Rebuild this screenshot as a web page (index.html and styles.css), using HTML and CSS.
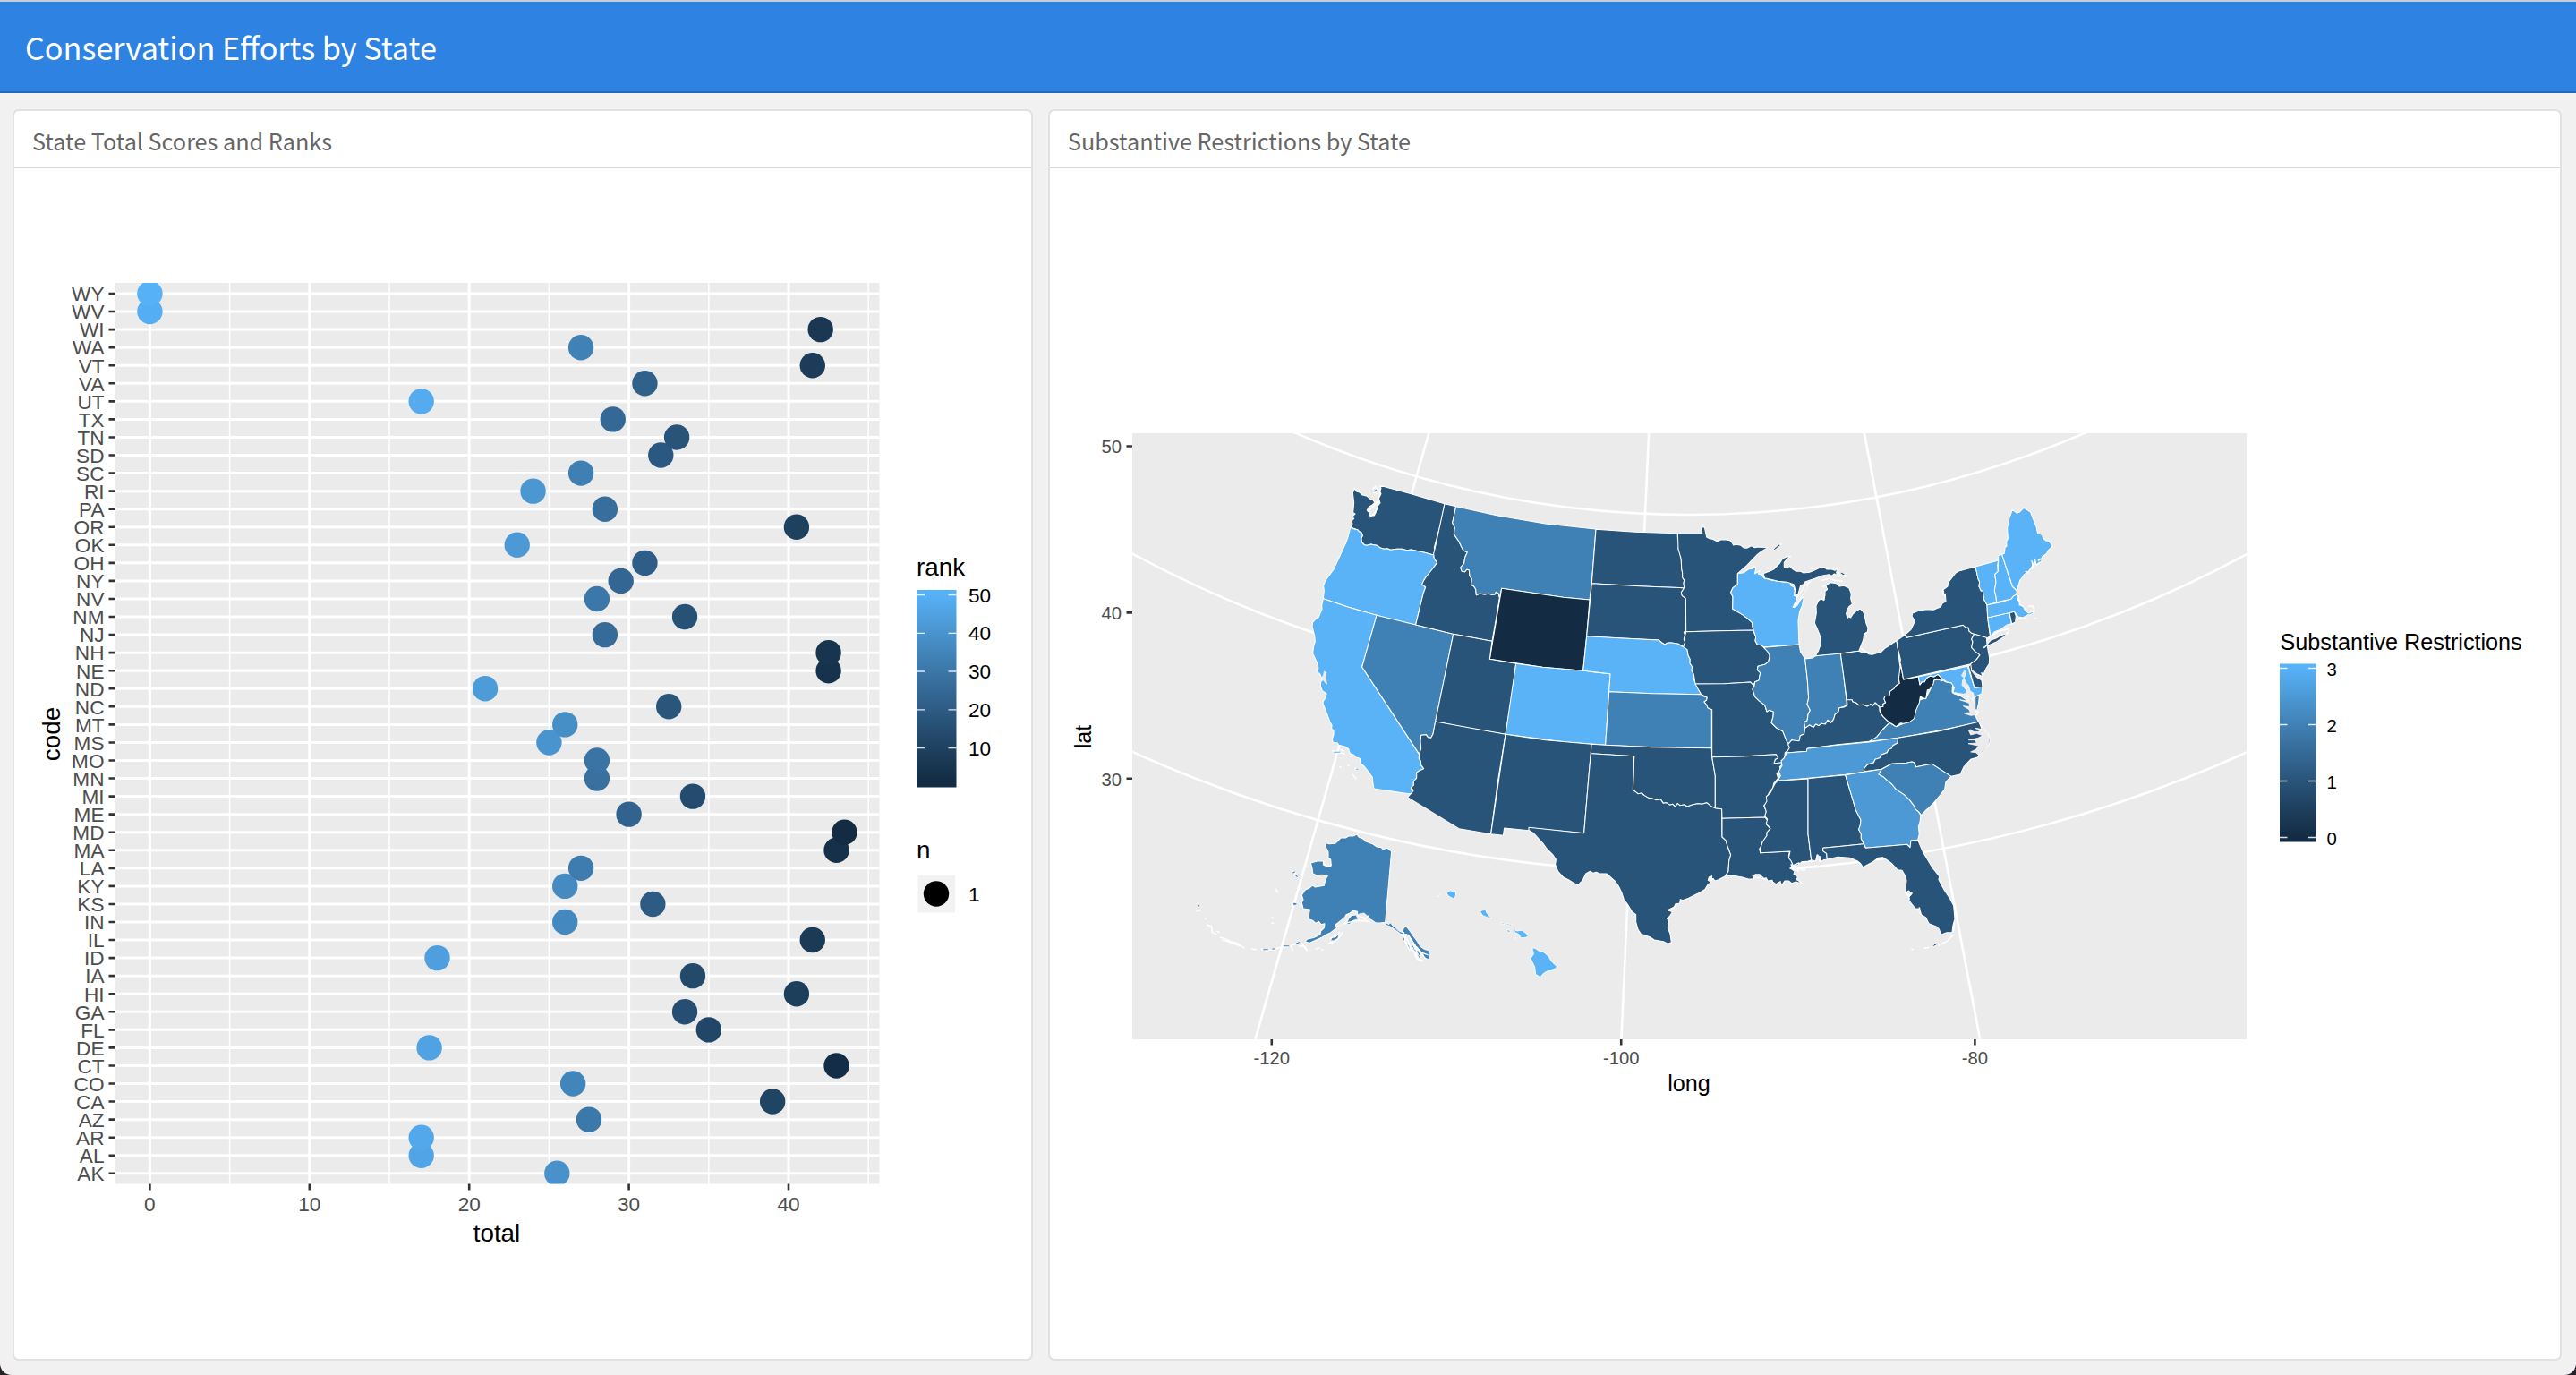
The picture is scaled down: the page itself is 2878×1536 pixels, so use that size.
FILE: index.html
```html
<!DOCTYPE html>
<html lang="en">
<head>
<meta charset="utf-8">
<title>Conservation Efforts by State</title>
<link rel="stylesheet" href="styles.css">
</head>
<body>
<div class="window">
<header class="navbar"><h1 class="brand">Conservation Efforts by State</h1></header>
<main class="dashboard">
<section class="card card-scores">
<h2 class="card-title">State Total Scores and Ranks</h2>
<svg class="chart" viewBox="16 188 1136 1330">
  <defs>
    <linearGradient id="ramp" x1="0" y1="1" x2="0" y2="0">
      <stop offset=".025" stop-color="#132B43"/><stop offset=".183" stop-color="#1E3F5D"/><stop offset=".342" stop-color="#29547A"/><stop offset=".5" stop-color="#356A97"/><stop offset=".658" stop-color="#4081B5"/><stop offset=".817" stop-color="#4C99D5"/><stop offset=".975" stop-color="#56B1F7"/>
    </linearGradient>
    <clipPath id="scorePanel"><rect x="128.5" y="316" width="854" height="1006.5"/></clipPath>
  </defs>
  <rect class="panel" x="128.5" y="316" width="854" height="1006.5"/>
  <g id="scoreGrid" clip-path="url(#scorePanel)"></g>
  <g id="scoreDots" clip-path="url(#scorePanel)"></g>
  <g id="scoreAxes" class="axis"></g>
  <text class="axis-title" x="555" y="1387" text-anchor="middle">total</text>
  <text class="axis-title" transform="translate(67 820) rotate(-90)" text-anchor="middle">code</text>
  <text class="axis-title" x="1024" y="642.5">rank</text>
  <rect x="1024" y="659" width="44.500" height="220.500" fill="url(#ramp)"/>
  <path class="legend-tick" d="M1024 664.5h9m26.500 0h9M1024 707.300h9m26.500 0h9M1024 750h9m26.500 0h9M1024 792.800h9m26.500 0h9M1024 835.500h9m26.500 0h9"/>
  <g class="legend-label"><text x="1082" y="672.500">50</text><text x="1082" y="715.300">40</text><text x="1082" y="758">30</text><text x="1082" y="800.800">20</text><text x="1082" y="843.500">10</text></g>
  <text class="axis-title" x="1024" y="959">n</text>
  <rect x="1025.500" y="978" width="41.500" height="41.500" fill="#f2f2f2"/>
  <circle cx="1046" cy="998.500" r="14.200"/>
  <text class="legend-label" x="1082" y="1007">1</text>
</svg>
</section>
<section class="card card-map">
<h2 class="card-title">Substantive Restrictions by State</h2>
<svg class="chart chart-map" viewBox="1173 188 1687 1330">
  <defs><clipPath id="mapPanel"><rect x="1265" y="484" width="1245" height="677"/></clipPath></defs>
  <rect class="panel" x="1265" y="484" width="1245" height="677"/>
  <g class="graticule" clip-path="url(#mapPanel)">
    <path d="M1596.400 483.800L1402.500 1160.700M1842.100 483.800L1811.400 1160.700M2082.800 483.800L2212.100 1160.700"/>
    <circle cx="1888.200" cy="-535" r="1110"/><circle cx="1888.200" cy="-535" r="1311"/><circle cx="1888.200" cy="-535" r="1509.500"/>
  </g>
  <g class="states" transform="scale(.333333)">
    <g transform="translate(4320 1500)">
      <path class="s1" d="M220 137L228 148 237 150 245 158 262 163 272 172 282 176 288 184 280 192 268 199 262 210 270 215 272 228 286 228 292 216 294 199 306 186 301 170 309 155 304 145 309 137 305 127L410 155 522 188L510 250 487 335 489 345 485 360L455 352 410 342 395 344 380 340 362 340 340 343 330 338 318 340 305 335 295 328 285 326 275 324 262 328 253 326 245 318 242 305 247 295 243 285 235 281 230 275 215 270 206 265 213 258 211 245 218 238 212 232 222 222 215 218 218 185 214 152Z"/>
      <path class="s3" d="M206 268L215 272 230 275 235 281 243 285 247 295 242 305 245 318 253 326 262 328 275 324 285 326 295 328 305 335 318 340 330 338 340 343 362 340 380 340 395 344 410 342 455 352 485 360 487 372 497 385 485 402 470 425 462 430 452 445 450 452 446 458 458 468 450 490 438 540 425 594L350 578 294 562 200 535 115 506L118 480 116 462 122 447 150 408 170 365 190 322 198 300Z"/>
      <path class="s3" d="M115 506L200 535 294 562L270 650 245 735L437 1028 436 1042 442 1050 443 1064 452 1076 445 1080 435 1084 428 1090 428 1108 418 1118 418 1132 410 1138 410 1145 417 1150 414 1158 402 1160L285 1143 281 1120 280 1105 262 1080 252 1068 240 1058 238 1042 225 1038 218 1030 205 1025 200 1010 188 1002 167 997 163 990 148 988 145 978 150 962 150 948 143 942 144 930 138 920 125 885 115 860 114 852 122 840 126 825 112 815 106 800 107 785 112 780 105 760 92 748 99 740 94 720 80 690 83 665 88 650 86 630 78 600 80 585 90 575 100 568 105 555 111 542 110 530Z"/>
      <path class="s2" d="M294 562L425 594 551 625L520 780 491 918L483 960 476 973 466 971 460 962 443 964 441 985 443 1008 437 1028L245 735Z"/>
      <path class="s1" d="M522 188L560 197 548 252 556 268 553 290 570 315 578 332 585 345 598 350 590 368 587 388 575 402 580 415 590 416 596 408 604 410 606 430 613 440 611 460 620 465 626 475 628 494 640 489 655 492 670 490 680 493 690 492 694 484 702 488 706 502L695 570 681 649L551 625 425 594L450 490 458 468 446 458 452 445 462 430 485 402 497 385 487 372 485 355 489 340Z"/>
      <path class="s2" d="M560 197L700 228 860 255 1029 273L1015 455 1008 510L920 502 713 472L706 502 702 488 694 484 690 492 680 493 670 490 655 492 640 489 628 494 626 475 620 465 611 460 613 440 606 430 604 410 596 408 590 416 580 415 575 402 587 388 590 368 598 350 585 345 578 332 570 315 553 290 556 268 548 252Z"/>
      <path class="s0" d="M713 472L920 502 1008 510L998 632 986 748L850 736 673 709Z"/>
      <path class="s1" d="M551 625L681 649 673 709 761 724L745 850 726 961L600 940 491 918Z"/>
      <path class="s3" d="M761 724L850 736 986 748 1077 758L1073 820 1061 997L930 987 726 961Z"/>
      <path class="s1" d="M491 918L726 961L700 1120 677 1295L570 1277L398 1172L408 1161 417 1150 410 1138 418 1132 418 1118 428 1108 428 1090 435 1084 452 1076 443 1064 442 1050 436 1042 437 1028 443 1008 441 985 443 964 460 962 466 971 476 973 483 960Z"/>
      <path class="s1" d="M726 961L860 980 1014 994L1012 1024 1000 1160 989 1292L806 1274 804 1283 722 1275 718 1300 677 1295Z"/>
      <path class="coast" d="M306 140L302 165 297 180 290 190 280 200 265 214M301 182L296 205 285 222 272 232M282 138L290 130 296 138M284 150L296 155M145 1015L162 1022 187 1026M171 1070L175 1072M198 1064L201 1066M223 1074L233 1080M214 1096L225 1110M176 1012L183 1017"/>
      <path class="water" d="M119 751L125 753 124 773 127 793 119 784 109 771 115 765Z"/>
      <path class="fill3" d="M152 1021h18M227 1077l5 2"/><path class="fill1" d="M285 146l7-3"/>
    </g>
    <g transform="translate(5340 1680)">
      <path class="s1" d="M9 94L140 103 283 107L283 125 288 140 285 160 292 175 295 195 296 225 299 240 299 255 305 265 303 275 307 290L170 285 -5 275Z"/>
      <path class="s1" d="M-5 275L170 285 305 290 302 300 295 305 298 316 310 326L311 436 304 438 308 450 304 462 308 472 302 488 285 478 275 476 262 474 250 474 240 480 230 474 219 465 100 459 -22 453Z"/>
      <path class="s3" d="M-22 452L100 459 219 465 230 474 240 480 250 474 262 474 285 478 302 488 315 497 318 515 325 530 324 542 332 555 330 567 337 580 336 592 340 605 347 615 352 630 362 647 200 644 53 638L57 578 -34 568Z"/>
      <path class="s2" d="M53 638L200 644 362 647 372 655 382 657 380 666 372 672 380 682 384 692 397 698V827L200 824 41 817Z"/>
      <path class="s1" d="M-6 814L41 817 200 824 397 827 398 857L409 920V1028L395 1022 380 1010 365 1015 350 1013 335 1016 315 1023 305 1017 290 1019 283 1013 275 1023 266 1015 257 1018 245 1010 235 1012 225 998 212 1001 200 997 185 994 170 985 163 978 150 980 133 967L137 854 -8 845Z"/>
      <path class="s1" d="M-8 845L137 854 133 967 150 980 163 978 170 985 185 994 200 997 212 1001 225 998 235 1012 245 1010 257 1018 266 1015 275 1023 283 1013 290 1019 305 1017 315 1023 335 1016 350 1013 365 1015 380 1010 395 1022 409 1028 431 1031L432 1125 444 1136 450 1155 461 1185 455 1205 453 1240 443 1256 420 1268 408 1272 402 1264 396 1270 398 1256 388 1260 385 1270 395 1276 383 1286 375 1300 350 1315 320 1330 300 1337 292 1334 290 1347 275 1350 272 1360 258 1366 250 1370 266 1376 258 1388 248 1400 253 1405 250 1430 258 1450 262 1478 250 1483 235 1475 205 1470 190 1460 160 1450 150 1435 143 1410 143 1385 130 1375 115 1350 103 1335 95 1310 85 1290 75 1275 45 1248 20 1247 10 1243 0 1246 -10 1240 -25 1248 -35 1270 -52 1287 -80 1270 -100 1260 -118 1240 -127 1218 -125 1200 -135 1185 -155 1165 -170 1145 -200 1112 -216 1102V1093L-31 1112 -15 920Z"/>
      <path class="s1" d="M283 107H365L363 87H373L380 120 390 125 400 127 415 134 428 129 445 129 458 131 465 138 470 147 480 145 495 148 505 156 515 157 530 149 540 155 555 153 585 155L565 167 550 178 515 215 484 242V278L468 290 461 305 468 320 467 360 500 380 520 395 533 407 534 422 539 432 420 434 311 437 310 326 298 316 295 305 305 290 303 275 305 265 299 255 299 240 296 225 295 195 285 160Z"/>
      <path class="s1" d="M311 437L420 434 537 432 541 445 545 455 543 468 550 480 563 482 572 490 585 504 592 518 587 538 575 547 552 553 550 565 560 575 555 600 542 605 537 617 527 606 440 611 342 612 337 580 330 567 332 555 324 542 325 530 318 515 315 497 302 488 308 472 304 462 308 450Z"/>
      <path class="s1" d="M342 612L440 611 527 606 539 618 534 630 542 655 555 668 575 683 582 705 590 700 604 705 603 722 597 742 615 760 635 770 645 795 655 812 660 830 643 842 640 875 606 878 610 865 620 860 612 848 500 855 398 857V698L384 692 380 682 372 672 380 666 382 657 362 647 352 630Z"/>
      <path class="s3" d="M484 242L505 239 520 228 533 226 540 218 545 225 541 243 558 233 553 243 565 247 572 257 600 265 620 268 640 271 660 271 663 282 673 288 676 305 673 316 683 320 680 345 673 356 683 350 695 330 707 318 700 350 692 370 687 400 688 430 690 480 572 488 563 482 550 480 543 468 545 455 537 432 533 407 520 395 500 380 467 360 468 320 461 305 468 290 484 278Z"/>
      <path class="s2" d="M572 490L690 480 695 505 710 528 718 600 722 660 717 680 727 700 720 715 717 735 707 740 710 760 707 780 694 785 692 803 678 803 665 800 658 812 650 808 645 795 635 770 615 760 597 742 603 722 604 705 590 700 582 705 575 683 555 668 542 655 534 630 540 618 542 605 555 600 560 575 550 565 552 553 575 547 587 538 592 518 585 504Z"/>
      <path class="s2" d="M710 528L735 525 745 518 829 509 840 590 848 660 850 683 840 688 825 692 822 705 810 715 806 730 797 742 786 733 778 747 765 745 756 752 746 747 738 758 725 750 710 760 707 740 717 735 720 715 727 700 717 680 722 660 718 600Z"/>
      <path class="s1" d="M398 857L500 855 612 848 620 860 610 865 606 878 640 875 625 890 628 902 615 912 620 928 605 945 602 960 590 975 582 995 585 1010 572 1020 580 1040 575 1059 432 1063 431 1031 409 1028V920Z"/>
      <path class="s1" d="M432 1063L575 1059 585 1070 580 1082 594 1097 582 1110 582 1125 568 1140 563 1155 557 1165 560 1178 658 1173 655 1190 663 1200 668 1215 662 1230 675 1240 672 1250 685 1258 682 1268 697 1275 697 1282 680 1275 665 1280 655 1272 642 1272 633 1285 625 1275 613 1283 605 1285 600 1270 585 1272 580 1262 565 1265 558 1250 545 1250 534 1255 540 1265 520 1266 500 1260 470 1255 443 1256 453 1240 455 1205 461 1185 450 1155 444 1136 432 1125Z"/>
      <path class="coast" d="M535 1252L550 1263 565 1258 575 1268M600 1275L615 1285 628 1275M663 1218L675 1222 671 1233 684 1232M690 1274L700 1280M390 1260L400 1268M260 1370L275 1356M670 1215L686 1210 705 1208M705 1225L710 1235"/>
    </g>
    <g transform="translate(5700 1680)">
      <path class="s1" d="M210 242L230 235 245 228 258 215 265 208 275 192 288 186 302 184 288 195 280 205 280 220 290 224 297 217 310 228 320 235 335 235 345 240 365 238 380 232 400 222 415 220 422 228 440 228 450 232 458 225 455 240 462 248 448 243 440 250 430 245 405 250 385 258 365 265 350 270 345 278 335 282 330 300 325 316 315 308 317 295 312 278 290 271 260 268 215 257Z"/>
      <path class="s1" d="M435 272L455 275 465 285 480 283 497 290 505 310 503 325 508 345 498 352 490 365 490 385 503 390 510 378 525 365 535 360 545 370 550 385 555 410 561 425 559 438 548 445 545 465 537 485 530 502 470 510 385 518 395 500 402 480 400 450 392 430 382 408 388 375 387 350 395 333 405 325 412 332 417 315 417 302 425 295 420 283Z"/>
      <path class="coast" d="M246 162L270 143M310 355L320 335 335 310 350 285 368 270M330 318L345 290M350 280L360 275M408 265L430 258 450 265 475 268M410 285L422 280M415 310L414 330M463 238L467 247M481 247L487 249M538 493L555 505 578 512M550 445L556 440M488 375L493 390"/>
      <path class="water" d="M315 352L323 325 345 290 353 275 362 271 358 290 345 310 330 330 322 346Z"/>
      <path class="fill1" d="M248 160l16-13M472 241l8 4"/>
      <path class="s1" d="M469 510L530 502 545 508 555 505 563 512 575 514 605 505 618 492 630 485 657 467 663 505 667 545 672 560 664 595 667 610 655 618 648 628 635 637 633 652 617 653 615 663 620 675 610 680 612 688 600 690 585 675 577 685 570 680 558 687 545 682 530 683 520 675 510 672 507 665 490 668 480 590Z"/>
      <path class="s1" d="M490 665L507 665 510 672 520 675 530 683 545 682 558 687 570 680 577 685 585 675 600 690 600 703 612 722 633 742 610 765 590 790 565 805 460 815 357 829 355 838 288 843 298 825 293 815 305 800 330 803 334 785 347 780 350 760 365 750 378 758 386 747 396 752 405 745 418 747 426 733 437 742 446 730 450 715 462 705 465 692 480 690 492 683Z"/>
      <path class="s2" d="M565 805L590 790 610 765 633 742 655 755 680 745 712 730 720 700 735 665 755 660 770 630 782 600 805 595 820 605 845 610 843 640 865 648 890 665 905 680 910 700 932 740 800 768 662 793Z"/>
      <path class="s2" d="M920 655L935 645 932 675 925 705 920 695Z"/>
      <path class="s0" d="M670 545L680 597 730 588 735 615 742 605 750 605 758 592 770 585 782 588 795 580 808 590 810 602 790 595 782 600 780 612 768 630 760 632 755 662 736 655 733 675 722 700 716 728 700 740 680 745 670 743 655 755 645 748 633 742 612 722 602 708 600 690 612 688 610 680 620 675 615 663 617 653 633 652 635 637 648 628 655 618 667 610 664 595Z"/>
      <path class="s3" d="M730 588L895 553 918 625 945 622 942 645 920 655 915 660 890 650 865 650 845 642 850 625 840 608 825 605 810 595 795 580 782 588 770 585 758 592 750 605 742 605 735 615Z"/>
      <path class="s1" d="M898 553L908 545 913 565 925 580 942 600 945 622 918 625Z"/>
      <path class="water" d="M885 567L890 574 883 592 888 606 898 618 904 637 914 642 916 655 910 663 920 680 919 700 927 715 905 718 882 710 904 708 900 698 880 686 902 688 900 676 868 665 898 670 897 655 870 650 848 645 852 641 880 646 894 642 888 630 876 616 878 600 883 592 875 585Z"/>
      <path class="water" d="M908 568L925 580 943 587 942 600 925 590Z"/>
      <path class="s1" d="M657 467L672 457 688 445 690 457 880 415 888 422 897 423 900 435 908 442 917 445 908 462 912 470 908 490 920 503 936 515 925 530 905 545 680 597 673 560 668 545 670 530 660 490Z"/>
      <path class="s1" d="M688 445L705 430 718 402 708 385 710 375 735 365 760 362 780 364 805 353 810 342 822 335 820 310 812 313 815 300 808 300 828 285 830 272 855 240 865 234 921 219 926 240 930 260 935 270 933 285 940 300 946 300 950 330 960 347 962 390 970 450 962 458 958 458 917 445 908 442 900 435 897 423 888 422 880 415 690 457Z"/>
      <path class="s1" d="M960 480L973 465 990 459 1005 450 1025 443 1035 432 1030 442 1015 455 990 472 965 483Z"/>
      <path class="s1" d="M917 445L958 457 960 480 968 525 967 545 957 560 945 587 925 578 908 565 905 545 925 530 936 515 920 503 908 490 912 470 908 462Z"/>
      <path class="s3" d="M962 390L1035 373 1042 410 1025 415 1005 430 985 437 972 453Z"/>
      <path class="s1" d="M1035 373L1052 370 1057 385 1055 405 1043 411Z"/>
      <path class="s3" d="M960 347L1000 340 1040 328 1048 318 1058 312 1066 320 1062 330 1072 338 1068 347 1080 350 1088 366 1100 375 1112 370 1116 366 1118 372 1105 380 1098 380 1080 390 1065 387 1052 370 962 390Z"/>
      <path class="s3" d="M921 219L998 198 995 215 997 235 986 245 990 270 985 300 990 320 992 338 960 347 950 330 946 300 940 300 933 285 935 270 930 260Z"/>
      <path class="s3" d="M998 198V182L1010 178 1030 240 1045 285 1060 300 1058 312 1048 318 1040 328 992 338 990 320 985 300 990 270 986 245 997 235Z"/>
      <path class="s3" d="M1010 178L1018 175 1020 155 1026 150 1025 135 1030 125 1028 90 1035 55 1045 28 1060 40 1068 37 1083 22 1105 35 1115 60 1125 85 1130 108 1145 112 1148 125 1158 132 1168 134 1180 150 1165 165 1160 175 1145 185 1143 200 1128 215 1118 203 1107 225 1095 238 1085 245 1078 255 1070 265 1060 300 1045 285 1030 240Z"/>
      <path class="coast" d="M962 480L950 490M960 465L975 450 1000 435 1030 428M1100 352L1112 350 1118 362 1115 372M1085 392L1092 393M1118 392L1124 392M1065 395L1075 390M1065 320L1070 345 1080 352M1110 200L1115 220 1105 228M1120 195L1125 215 1135 205M1132 198L1142 192M1090 235L1100 240M845 640L870 650M945 587L942 575M932 705L922 718M670 545L672 560M812 303L820 318"/>
    </g>
    <g transform="translate(5700 2340)">
      <path class="s2h" d="M288 183L355 178 357 169 460 157 565 147 662 133 660 150 645 158 640 168 630 172 625 182 605 190 600 200 585 205 580 216 560 222 548 235 549 247 485 256 360 268 258 277 268 260 262 245 273 225 270 210 280 200Z"/>
      <path class="s1" d="M258 277L360 270V455L371 542 360 547 340 548 325 560 310 560 303 545 295 535 300 513 200 518 203 495 208 480 222 460 222 450 234 437 220 420 224 405 215 395 220 380 213 360 222 345 220 330 235 315 242 300 250 285Z"/>
      <path class="s1" d="M360 269L485 257 510 340 520 375 537 408 535 425 530 440 538 455 538 470 547 488 480 495 410 502 410 512 422 520 424 540 412 542 402 548 398 530 390 525 386 545 371 542 360 455Z"/>
      <path class="s1" d="M548 245V235L560 222 580 216 585 205 600 200 605 190 625 182 630 172 640 168 645 158 660 150 662 133 800 110 932 79 940 95 960 115 970 135 968 152 945 180 933 190 930 197 905 205 882 230 870 255 840 262 775 220 722 230 715 215 708 213 690 217 640 220 607 238Z"/>
      <path class="s2h" d="M485 257L548 247 607 238 597 255 612 263 625 275 640 287 655 305 685 325 700 340 715 360 720 372 730 380 738 392 735 415 730 430 733 455 728 475 705 477 702 500 692 490 553 502 547 488 538 470 538 455 530 440 535 425 537 408 520 375 510 340Z"/>
      <path class="s2" d="M607 238L640 220 690 217 708 213 715 215 722 230 775 220 840 262 822 280 818 305 805 322 790 340 780 352 765 367 755 375 740 392 730 380 720 372 715 360 700 340 685 325 655 305 640 287 625 275 612 263 597 255Z"/>
      <path class="s1" d="M547 488L553 502 692 490 702 500 705 477 728 475 745 515 775 565 800 597 798 608 815 640 835 670 848 695 852 740 846 760 843 785 825 785 805 793 800 775 790 765 765 755 755 735 735 722 730 705 720 705 700 680 697 667 708 655 697 645 686 652 690 610 683 590 675 577 660 575 640 553 625 542 610 533 595 535 575 550 555 560 545 567 535 553 525 545 500 535 460 532 424 540 422 520 410 512 410 502 480 495Z"/>
      <path class="water" d="M938 88L968 130 964 155 932 190 922 182 905 180 922 172 932 160 915 156 897 152 925 150 920 140 898 140 930 133 945 125 925 118 905 123 898 107 905 105 915 112 935 112 930 105 920 100 940 103Z"/>
      <path class="coast" d="M388 542L392 525M398 545L402 530M310 560L330 552M340 548L380 547M325 568L328 580M330 570L345 577M798 828L825 815 845 795M851 750L848 780M708 841L712 842M750 838L765 835M686 650L700 662 708 652M692 655L700 672M733 702L738 722M300 570L320 572"/>
      <path class="s1 thin" d="M775 832L785 823 796 820 793 826 782 831Z"/>
    </g>
    <g transform="translate(3960 2580)">
      <path class="s2" d="M485 245L495 248 515 247 525 237 535 227 550 228 560 222 575 222 588 216 595 226 610 232 618 240 640 248 655 258 670 260 675 266 690 262 704 273 683 511 665 513 650 512 640 505 628 498 620 490 600 492 590 485 590 475 575 472 565 480 552 485 545 500 530 508 515 520 520 530 500 545 480 555 470 562 430 580 415 577 420 568 445 562 465 552 467 540 478 530 480 515 468 518 460 508 450 514 440 505 425 500 430 468 408 465 403 445 408 435 403 420 415 402 430 395 440 387 448 393 478 388 482 370 490 355 470 352 455 355 440 347 438 330 433 312 455 306 477 305 475 318 490 325 502 320 500 300 492 295 492 275 482 255Z"/>
      <path class="water" d="M515 525L530 508 548 492 565 480 578 473 588 478 580 486 565 488 550 510 530 522ZM595 483L612 480 628 494 620 500 600 508 592 495Z"/>
      <path class="s2 thin" d="M552 518L560 500 570 488 585 486 592 500 575 505 565 516ZM500 572L505 560 515 562 527 548 525 565 510 572ZM683 511L695 518 700 512 708 522 718 530 728 540 740 545 745 530 753 525 765 540 775 555 790 575 800 592 815 602 828 605 834 618 828 635 815 630 808 615 795 600 785 590 775 575 765 560 755 550 745 552 735 550 715 535 700 525 685 520ZM745 560L752 570 750 578 742 568ZM755 580L765 590 768 608 758 595ZM770 585L782 592 790 612 780 605ZM785 612L798 625 805 640 795 635ZM373 445L388 446 386 452 377 455ZM383 582L397 575 403 582 388 585Z"/>
      <path class="coast" d="M748 555L760 575 768 600 785 612 800 640M760 553L775 578 782 600 805 618 820 635M745 545L750 575 765 605M790 595L800 610 825 620M780 615L790 635 808 640M768 565L790 600M370 340L380 345 390 361M317 400L322 411M304 494L306 498M303 512L308 515M55 452L58 460M52 473L64 470M80 499h3M86 520L100 524 103 545 116 550M120 541L126 545M130 562L145 565 165 575 190 583 210 597M138 570L160 577 195 590M235 600L250 602M268 601L285 605 310 603 325 596 345 593 365 590 385 582 400 578M368 590L372 604M395 590L415 592 420 606M405 582L415 600M450 600L462 596M470 602h4M492 582L515 575 530 560 540 544M498 565L520 555 530 545M545 515L575 508 600 505 630 508M590 488L615 498 625 490M475 308L485 322 500 322M420 325h4"/>
      <path class="fill2" d="M275 602h14M305 600h8M343 590h17M385 582l10-4M374 345l5-3M382 352l6 6M56 458l3-3M792 608l6 12"/>
      <path class="s3 thin" d="M889 412L900 405 918 408 920 422 910 431 895 423ZM1001 473L1012 470 1017 463 1022 478 1038 497 1025 494 1010 488ZM1070 512L1088 515 1107 518 1103 522 1088 518 1075 517ZM1090 536L1100 538 1102 545 1094 543ZM1115 532L1122 540 1142 538 1163 555 1155 562 1138 563 1130 550 1118 545ZM1116 565L1124 563 1123 567ZM1176 597L1185 598 1197 606 1215 612 1230 625 1240 642 1259 660 1245 672 1225 675 1212 683 1203 695 1187 685 1184 660 1170 632 1180 618ZM857 425L866 418 864 422Z"/>
    </g>
  </g>
  <g class="axis">
    <path d="M1258.500 498.500H1265M1258.500 684.400H1265M1258.500 869.700H1265M1420.800 1161v6.500M1811.200 1161v6.500M2206.400 1161v6.500"/>
    <g text-anchor="end"><text x="1253" y="506">50</text><text x="1253" y="692">40</text><text x="1253" y="877.500">30</text></g>
    <g text-anchor="middle"><text x="1420.800" y="1188.500">-120</text><text x="1811.200" y="1188.500">-100</text><text x="2206.400" y="1188.500">-80</text></g>
  </g>
  <text class="axis-title" x="1887" y="1218.500" text-anchor="middle">long</text>
  <text class="axis-title" transform="translate(1218.500 823) rotate(-90)" text-anchor="middle">lat</text>
  <text class="axis-title" x="2547.500" y="726">Substantive Restrictions</text>
  <rect x="2547" y="741.500" width="40.500" height="199" fill="url(#ramp)"/>
  <path class="legend-tick" d="M2547 746.500h8.500m23.500 0h8.500M2547 809.500h8.500m23.500 0h8.500M2547 872.500h8.500m23.500 0h8.500M2547 935.500h8.500m23.500 0h8.500"/>
  <g class="legend-label"><text x="2599.500" y="754.500">3</text><text x="2599.500" y="817.500">2</text><text x="2599.500" y="880.500">1</text><text x="2599.500" y="943.500">0</text></g>
</svg>
</section>
</main>
</div>
<script src="scores.js"></script>
</body>
</html>
```
FILE: styles.css
```css
* { box-sizing: border-box; }
html { background: #29212a; }
body { margin: 0; width: 2878px; height: 1536px; overflow: hidden; }
.window { height: 1536px; display: flex; flex-direction: column; background: #f1f1f1; border-top: 2px solid #c4ccd6; border-radius: 0 0 13px 13px; overflow: hidden; }
.navbar { flex: none; height: 102px; padding: 0 28px; display: flex; align-items: center; background: #2e82e1; border-bottom: 2px solid #2268b8; }
.brand { margin: 0; font: 400 34.200px/50px "Noto Sans CJK SC", "Open Sans", sans-serif; color: #fff; }
.dashboard { flex: 1; min-height: 0; display: flex; gap: 17px; padding: 18px 16px 16px 14px; }
.card { display: flex; flex-direction: column; background: #fff; border: 2px solid #e1e1e1; border-radius: 7px; overflow: hidden; }
.card-scores { flex: none; width: 1140px; }
.card-map { flex: 1; min-width: 0; }
.card-title { flex: none; height: 64px; margin: 0; padding: 6px 20px 0; border-bottom: 2px solid #d8d8d8; font: 400 25.200px/54px "Noto Sans CJK SC", "Open Sans", sans-serif; color: #666; }
.chart { display: block; flex: 1; min-height: 0; width: 100%; font-family: "Liberation Sans", Arial, sans-serif; font-size: 22.600px; }
.chart-map { font-size: 20.300px; }
.panel { fill: #ebebeb; }
.axis text { fill: #4d4d4d; }
.axis path { stroke: #333; stroke-width: 2.600; fill: none; }
.axis-title { font-size: 27.800px; fill: #000; }
.chart-map .axis-title { font-size: 25.200px; }
.legend-label { fill: #000; }
.legend-tick { stroke: #fff; stroke-opacity: .85; stroke-width: 1.300; fill: none; }
.grid-major { stroke: #fff; stroke-width: 3; }
.grid-minor { stroke: #fff; stroke-width: 1.500; }
.graticule { fill: none; stroke: #fff; stroke-width: 2.600; }
.states { stroke: #fff; stroke-width: 3.200; stroke-linejoin: round; stroke-linecap: round; }
.s0 { fill: #132b43; }
.s1 { fill: #29547a; }
.s2 { fill: #4081b5; }
.s2h { fill: #4c99d5; }
.s3 { fill: #5ab2f7; }
.thin { stroke-width: 2.500; }
.coast { fill: none; stroke-width: 4.500; }
.water { fill: #ebebeb; stroke-width: 2.200; }
.fill1 { fill: none; stroke: #29547a; }
.fill2 { fill: none; stroke: #4081b5; }
.fill3 { fill: none; stroke: #5ab2f7; }
```
FILE: scores.js
```js
const totals = {
  AK: 25.5, AL: 17, AR: 17, AZ: 27.5, CA: 39, CO: 26.5, CT: 43, DE: 17.5, FL: 35, GA: 33.5,
  HI: 40.5, IA: 34, ID: 18, IL: 41.5, IN: 26, KS: 31.5, KY: 26, LA: 27, MA: 43, MD: 43.5,
  ME: 30, MI: 34, MN: 28, MO: 28, MS: 25, MT: 26, NC: 32.5, ND: 21, NE: 42.5, NH: 42.5,
  NJ: 28.5, NM: 33.5, NV: 28, NY: 29.5, OH: 31, OK: 23, OR: 40.5, PA: 28.5, RI: 24, SC: 27,
  SD: 32, TN: 33, TX: 29, UT: 17, VA: 31, VT: 41.5, WA: 27, WI: 42, WV: 0, WY: 0
};
const ramp = [[19,43,67],[30,63,93],[41,84,122],[53,106,151],[64,129,181],[76,153,213],[86,177,247]];
const codes = Object.keys(totals);
const ranked = [...codes].sort((a, b) => totals[b] - totals[a] || a.localeCompare(b));
const x = v => 167.4 + v * 17.84;
const y = i => 1310.8 - i * 20.057;

function color(rank) {
  const t = (rank - 1) / 49 * 6;
  const i = Math.min(5, Math.floor(t));
  return `rgb(${ramp[i].map((c, k) => Math.round(c + (ramp[i + 1][k] - c) * (t - i))).join(",")})`;
}

let grid = "", dots = "", ticks = "", labels = "";
for (let v = 5; v <= 45; v += 10) grid += `<path class="grid-minor" d="M${x(v)} 316V1323"/>`;
codes.forEach((code, i) => {
  grid += `<path class="grid-major" d="M128 ${y(i)}H983"/>`;
  ticks += `M121.500 ${y(i)}H128.500`;
  labels += `<text x="116.500" y="${y(i) + 8.3}" text-anchor="end">${code}</text>`;
  dots += `<circle cx="${x(totals[code])}" cy="${y(i)}" r="14.200" fill="${color(ranked.indexOf(code) + 1)}"/>`;
});
for (let v = 0; v <= 40; v += 10) {
  grid += `<path class="grid-major" d="M${x(v)} 316V1323"/>`;
  ticks += `M${x(v)} 1322.500v7`;
  labels += `<text x="${x(v)}" y="1352.500" text-anchor="middle">${v}</text>`;
}
document.getElementById("scoreGrid").innerHTML = grid;
document.getElementById("scoreDots").innerHTML = dots;
document.getElementById("scoreAxes").innerHTML = `<path d="${ticks}"/>${labels}`;
```
